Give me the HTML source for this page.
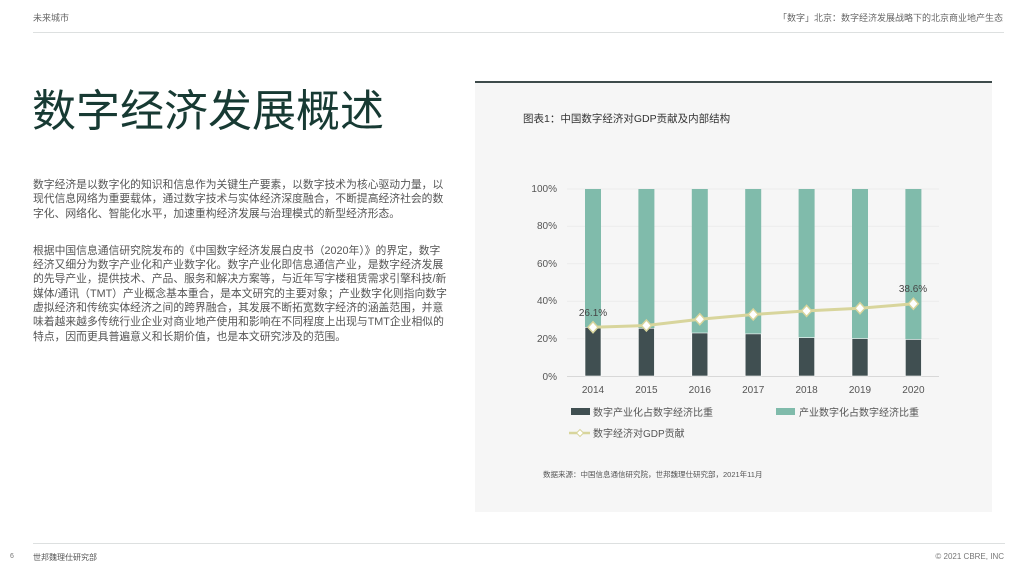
<!DOCTYPE html>
<html><head><meta charset="utf-8"><style>
body{margin:0;width:1024px;height:576px;background:#fff;position:relative;overflow:hidden;font-family:"Liberation Sans","Noto Sans CJK SC",sans-serif}
.a{position:absolute;white-space:nowrap}
.hdr{font-size:9px;color:#666;top:11px}
.body{position:absolute;left:33px;font-size:10.8px;line-height:14.3px;color:#555;letter-spacing:0;white-space:nowrap}
.body p{margin:0 0 23px 0}
</style></head><body>
<div class="a hdr" style="left:33px">未来城市</div>
<div class="a hdr" style="right:21px">「数字」北京：数字经济发展战略下的北京商业地产生态</div>
<div class="a" style="left:33px;top:32px;width:971px;height:1px;background:#dde0e0"></div>
<div class="a" style="left:32px;top:75px;font-size:44px;color:#173a33;font-family:'Noto Sans CJK SC',sans-serif;font-weight:400">数字经济发展概述</div>
<div class="body" style="top:178px">
<p>数字经济是以数字化的知识和信息作为关键生产要素，以数字技术为核心驱动力量，以<br>现代信息网络为重要载体，通过数字技术与实体经济深度融合，不断提高经济社会的数<br>字化、网络化、智能化水平，加速重构经济发展与治理模式的新型经济形态。</p>
<p>根据中国信息通信研究院发布的《中国数字经济发展白皮书（2020年）》的界定，数字<br>经济又细分为数字产业化和产业数字化。数字产业化即信息通信产业，是数字经济发展<br>的先导产业，提供技术、产品、服务和解决方案等，与近年写字楼租赁需求引擎科技/新<br>媒体/通讯（TMT）产业概念基本重合，是本文研究的主要对象；产业数字化则指向数字<br>虚拟经济和传统实体经济之间的跨界融合，其发展不断拓宽数字经济的涵盖范围，并意<br>味着越来越多传统行业企业对商业地产使用和影响在不同程度上出现与TMT企业相似的<br>特点，因而更具普遍意义和长期价值，也是本文研究涉及的范围。</p>
</div>
<div class="a" style="left:475px;top:81px;width:517px;height:429px;background:#f6f6f6;border-top:2px solid #3e4b4b"></div>
<div class="a" style="left:523px;top:111px;font-size:10.5px;color:#333">图表1：中国数字经济对GDP贡献及内部结构</div>
<svg class="a" style="left:0;top:0" width="1024" height="576" font-family="Liberation Sans, Noto Sans CJK SC, sans-serif">
<g stroke="#ececec" stroke-width="1">
<line x1="567" y1="189" x2="939" y2="189"/><line x1="567" y1="226.4" x2="939" y2="226.4"/><line x1="567" y1="263.8" x2="939" y2="263.8"/><line x1="567" y1="301.2" x2="939" y2="301.2"/><line x1="567" y1="338.6" x2="939" y2="338.6"/>
</g>
<line x1="567" y1="376.5" x2="939" y2="376.5" stroke="#d8d8d8"/>
<g font-size="10" fill="#555" text-anchor="end">
<text x="557" y="192">100%</text><text x="557" y="229">80%</text><text x="557" y="267">60%</text><text x="557" y="304">40%</text><text x="557" y="342">20%</text><text x="557" y="380">0%</text>
</g>
<g fill="#80bbab">
<rect x="585" y="189" width="16" height="187"/><rect x="638.4" y="189" width="16" height="187"/><rect x="691.8" y="189" width="16" height="187"/><rect x="745.2" y="189" width="16" height="187"/><rect x="798.6" y="189" width="16" height="187"/><rect x="852" y="189" width="16" height="187"/><rect x="905.4" y="189" width="16" height="187"/>
</g>
<g fill="#404f51" stroke="#fff" stroke-width="0.6">
<rect x="585" y="327.4" width="16" height="48.6"/><rect x="638.4" y="328.3" width="16" height="47.7"/><rect x="691.8" y="333" width="16" height="43"/><rect x="745.2" y="333.9" width="16" height="42.1"/><rect x="798.6" y="337.7" width="16" height="38.3"/><rect x="852" y="338.6" width="16" height="37.4"/><rect x="905.4" y="339.5" width="16" height="36.5"/>
</g>
<polyline points="593,327.2 646.4,325.5 699.8,319.3 753.2,314.5 806.6,310.9 860,308.3 913.4,303.8" fill="none" stroke="#d8d59c" stroke-width="3"/>
<g fill="#fff" stroke="#d8d59c" stroke-width="1.5">
<path d="M593 321.7l5 5.5-5 5.5-5-5.5z"/><path d="M646.4 320l5 5.5-5 5.5-5-5.5z"/><path d="M699.8 313.8l5 5.5-5 5.5-5-5.5z"/><path d="M753.2 309l5 5.5-5 5.5-5-5.5z"/><path d="M806.6 305.4l5 5.5-5 5.5-5-5.5z"/><path d="M860 302.8l5 5.5-5 5.5-5-5.5z"/><path d="M913.4 298.3l5 5.5-5 5.5-5-5.5z"/>
</g>
<g font-size="10" fill="#444" text-anchor="middle">
<text x="593" y="316">26.1%</text><text x="913" y="292">38.6%</text>
</g>
<g font-size="10" fill="#555" text-anchor="middle">
<text x="593" y="393">2014</text><text x="646.4" y="393">2015</text><text x="699.8" y="393">2016</text><text x="753.2" y="393">2017</text><text x="806.6" y="393">2018</text><text x="860" y="393">2019</text><text x="913.4" y="393">2020</text>
</g>
<rect x="571" y="408" width="19" height="7" fill="#404f51"/>
<text x="593" y="416" font-size="10" fill="#555">数字产业化占数字经济比重</text>
<rect x="776" y="408" width="19" height="7" fill="#80bbab"/>
<text x="799" y="416" font-size="10" fill="#555">产业数字化占数字经济比重</text>
<line x1="569" y1="433" x2="590" y2="433" stroke="#d8d59c" stroke-width="2.5"/>
<path d="M580 429.5l3.5 3.5-3.5 3.5-3.5-3.5z" fill="#fff" stroke="#d8d59c"/>
<text x="593" y="437" font-size="10" fill="#555">数字经济对GDP贡献</text>
<text x="543" y="477" font-size="7.5" fill="#555">数据来源：中国信息通信研究院，世邦魏理仕研究部，2021年11月</text>
</svg>
<div class="a" style="left:33px;top:543px;width:972px;height:1px;background:#dde0e0"></div>
<div class="a" style="left:10px;top:553px;font-size:7px;color:#777">6</div>
<div class="a" style="left:33px;top:552px;font-size:8px;color:#555">世邦魏理仕研究部</div>
<div class="a" style="right:20px;top:552px;font-size:8px;color:#777">© 2021 CBRE, INC</div>
</body></html>
